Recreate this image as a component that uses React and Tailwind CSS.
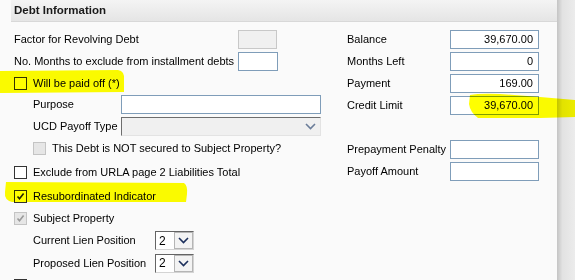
import React from "react";

const font = { fontFamily: '"Liberation Sans", Arial, sans-serif' };

const Check = ({ checked, disabled }) => (
  <span
    className={
      "inline-flex h-[13px] w-[13px] shrink-0 items-center justify-center border " +
      (disabled ? "border-[#c4c4c4] bg-[#e6e6e6]" : "border-[#333333] bg-white")
    }
  >
    {checked && (
      <svg width="9" height="9" viewBox="0 0 9 9">
        <path
          d="M1.5 4.5 L3.5 6.8 L7.6 1.6"
          fill="none"
          stroke={disabled ? "#9a9a9a" : "#222222"}
          strokeWidth="1.6"
        />
      </svg>
    )}
  </span>
);

const Input = ({ value, className }) => (
  <div
    className={
      "flex h-[19px] items-center justify-end border border-[#7f9db9] bg-white px-[5px] text-[11px] text-black " +
      (className || "")
    }
  >
    {value}
  </div>
);

const Chevron = ({ color }) => (
  <svg width="11" height="7" viewBox="0 0 11 7">
    <path d="M1 1 L5.5 5.5 L10 1" fill="none" stroke={color} strokeWidth="1.6" />
  </svg>
);

const LienSelect = () => (
  <div className="flex h-[19px] w-[39px] border border-t-[#646464] border-l-[#646464] border-r-[#d4d4d4] border-b-[#d4d4d4] bg-white">
    <div className="flex flex-1 items-center pl-[3px] text-[12px]">2</div>
    <div className="flex w-[19px] items-center justify-center border border-[#b5b5b5] bg-[#f3f3f3]">
      <Chevron color="#1c2f5c" />
    </div>
  </div>
);

const leftRows = [
  { h: 22, kind: "field", label: "Factor for Revolving Debt", input: "disabled" },
  { h: 22, kind: "field", label: "No. Months to exclude from installment debts", input: "small" },
  { h: 22, kind: "check", label: "Will be paid off (*)" },
  { h: 21, kind: "purpose" },
  { h: 22, kind: "ucd" },
  { h: 23, kind: "notsecured" },
  { h: 25, kind: "check", label: "Exclude from URLA page 2 Liabilities Total" },
  { h: 22, kind: "check", label: "Resubordinated Indicator", checked: true },
  { h: 22, kind: "check", label: "Subject Property", checked: true, disabled: true },
  { h: 23, kind: "lien", label: "Current Lien Position" },
  { h: 22, kind: "lien", label: "Proposed Lien Position" },
  { h: 22, kind: "check", label: "" },
];

const rightRows = [
  { label: "Balance", value: "39,670.00" },
  { label: "Months Left", value: "0" },
  { label: "Payment", value: "169.00" },
  { label: "Credit Limit", value: "39,670.00" },
  null,
  { label: "Prepayment Penalty", value: "" },
  { label: "Payoff Amount", value: "" },
];

const LeftRow = ({ row }) => {
  const style = { height: row.h };
  if (row.kind === "field") {
    return (
      <div className="flex items-center" style={style}>
        <span className="w-[224px] whitespace-nowrap">{row.label}</span>
        {row.input === "disabled" ? (
          <div className="h-[19px] w-[39px] border border-[#c8c8c8] bg-[#f0f0f0]" />
        ) : (
          <div className="h-[19px] w-[40px] border border-[#7f9db9] bg-white" />
        )}
      </div>
    );
  }
  if (row.kind === "check") {
    return (
      <div className="flex items-center gap-[6px] whitespace-nowrap" style={style}>
        <Check checked={row.checked} disabled={row.disabled} />
        <span>{row.label}</span>
      </div>
    );
  }
  if (row.kind === "purpose") {
    return (
      <div className="flex items-center pl-[19px]" style={style}>
        <span className="w-[88px] whitespace-nowrap">Purpose</span>
        <div className="h-[19px] w-[200px] border border-[#7f9db9] bg-white" />
      </div>
    );
  }
  if (row.kind === "ucd") {
    return (
      <div className="flex items-center pl-[19px]" style={style}>
        <span className="w-[88px] whitespace-nowrap">UCD Payoff Type</span>
        <div className="flex h-[19px] w-[200px] items-center justify-end border border-t-[#6d6d6d] border-l-[#6d6d6d] border-r-[#e3e3e3] border-b-[#e3e3e3] bg-[#f0f0f0] pr-[4px]">
          <Chevron color="#6b7d99" />
        </div>
      </div>
    );
  }
  if (row.kind === "notsecured") {
    return (
      <div className="flex items-center gap-[6px] whitespace-nowrap pl-[19px]" style={style}>
        <Check disabled />
        <span>This Debt is NOT secured to Subject Property?</span>
      </div>
    );
  }
  return (
    <div className="flex items-center pl-[19px]" style={style}>
      <span className="w-[122px] whitespace-nowrap">{row.label}</span>
      <LienSelect />
    </div>
  );
};

export default function App() {
  return (
    <div className="relative flex h-[280px] w-[575px] overflow-hidden bg-[#fafafa] text-[11px] text-black" style={font}>
      <div className="flex w-[557px] flex-col">
        <div className="ml-[11px] flex h-[22px] shrink-0 items-center border-b border-[#d8d8d8] bg-gradient-to-b from-[#f4f4f4] to-[#e5e5e5] pl-[3px] text-[11.5px] font-bold text-[#1a1a1a]">
          Debt Information
        </div>
        <div className="flex pt-[6px]">
          <div className="w-[347px] shrink-0 pl-[14px]">
            {leftRows.map((row, i) => (
              <LeftRow key={i} row={row} />
            ))}
          </div>
          <div className="w-[192px] shrink-0">
            {rightRows.map((row, i) =>
              row ? (
                <div key={i} className="flex h-[22px] items-center">
                  <span className="w-[103px] whitespace-nowrap">{row.label}</span>
                  <Input value={row.value} className="w-[89px]" />
                </div>
              ) : (
                <div key={i} className="h-[22px]" />
              )
            )}
          </div>
        </div>
      </div>
      <div className="w-[18px] bg-gradient-to-r from-[#c4c4c4] via-[#e2e2e2] via-30% to-[#ececec]" />

      {/* highlighter marks */}
      <svg className="pointer-events-none absolute left-0 top-0 mix-blend-multiply" width="575" height="280">
        <path d="M0 71 L118 70 Q125 71 124 80 L124 92 L2 93 L0 93 Z" fill="#ffff00" />
        <path d="M6 182 L184 183 Q188 186 187 194 L186 202 L12 202 Q4 200 5 192 Z" fill="#ffff00" />
        <path d="M470 95 Q480 93 500 94 L540 97 L575 100 L575 117 L540 118 L478 118 Q470 112 469 104 Z" fill="#ffff00" />
      </svg>
    </div>
  );
}
